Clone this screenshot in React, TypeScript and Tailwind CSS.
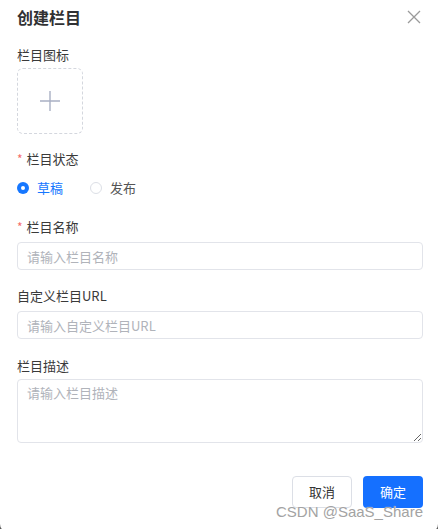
import { useState } from "react";

const cjk = { fontFamily: '"Noto Sans CJK SC", "Noto Sans", sans-serif' };

function Label({ text, required }: { text: string; required?: boolean }) {
  return (
    <div className="flex items-center h-[20px] text-[13px] text-[#3a3a3a]">
      {required && <span className="text-[#f56c6c] mr-[4px] text-[12px] leading-none">*</span>}
      <span>{text}</span>
    </div>
  );
}

function Radio({ label, checked, onClick }: { label: string; checked: boolean; onClick: () => void }) {
  return (
    <button onClick={onClick} className="flex items-center h-[20px] cursor-pointer">
      {checked ? (
        <span className="w-[12px] h-[12px] rounded-full bg-[#1677ff] flex items-center justify-center">
          <span className="w-[4px] h-[4px] rounded-full bg-white" />
        </span>
      ) : (
        <span className="w-[12px] h-[12px] rounded-full border border-[#dcdfe6] bg-white" />
      )}
      <span className={`ml-[8px] text-[13px] ${checked ? "text-[#1677ff]" : "text-[#555]"}`}>{label}</span>
    </button>
  );
}

export default function App() {
  const [status, setStatus] = useState("draft");

  return (
    <div className="w-[438px] h-[529px] overflow-hidden bg-[#5a5a5a]" style={cjk}>
      <div className="relative bg-white h-[532px] rounded-b-[8px] pl-[17px] pr-[15px] pt-[5px]">
        {/* 标题栏 */}
        <div className="flex items-center justify-between h-[24px]">
          <h2 className="text-[16px] font-bold text-[#303133]">创建栏目</h2>
          <svg width="14" height="14" viewBox="0 0 14 14" className="mr-[2px]">
            <path d="M1 1L13 13M13 1L1 13" stroke="#9a9a9a" strokeWidth="1.3" fill="none" />
          </svg>
        </div>

        <div className="mt-[16px]">
          <Label text="栏目图标" />
        </div>
        <div className="mt-[3px] w-[66px] h-[66px] border border-dashed border-[#d4d7de] rounded-[6px] flex items-center justify-center">
          <svg width="22" height="22" viewBox="0 0 22 22">
            <path d="M11 1V21M1 11H21" stroke="#a9b0c4" strokeWidth="1.4" fill="none" />
          </svg>
        </div>

        <div className="mt-[15px]">
          <Label text="栏目状态" required />
        </div>
        <div className="mt-[9px] flex items-center gap-[27px]">
          <Radio label="草稿" checked={status === "draft"} onClick={() => setStatus("draft")} />
          <Radio label="发布" checked={status === "publish"} onClick={() => setStatus("publish")} />
        </div>

        <div className="mt-[19px]">
          <Label text="栏目名称" required />
        </div>
        <input
          className="mt-[5px] w-full h-[28px] border border-[#e2e4ea] rounded-[4px] px-[9px] text-[13px] outline-none placeholder:text-[#b0b3ba]"
          placeholder="请输入栏目名称"
        />

        <div className="mt-[16px]">
          <Label text="自定义栏目URL" />
        </div>
        <input
          className="mt-[5px] w-full h-[28px] border border-[#e2e4ea] rounded-[4px] px-[9px] text-[13px] outline-none placeholder:text-[#b0b3ba]"
          placeholder="请输入自定义栏目URL"
        />

        <div className="mt-[17px]">
          <Label text="栏目描述" />
        </div>
        <textarea
          className="block mt-[3px] w-full h-[64px] border border-[#e2e4ea] rounded-[4px] px-[9px] py-[3px] text-[13px] outline-none placeholder:text-[#b0b3ba]"
          placeholder="请输入栏目描述"
        />

        {/* 底部按钮 */}
        <div className="mt-[33px] flex justify-end gap-[11px]">
          <button className="w-[60px] h-[32px] border border-[#dcdfe6] rounded-[4px] bg-white text-[13px] text-[#333]">
            取消
          </button>
          <button className="w-[60px] h-[32px] rounded-[4px] bg-[#1570ff] text-[13px] text-white">
            确定
          </button>
        </div>

        {/* 水印 */}
        <div
          className="absolute right-[15px] top-[502px] text-[15px] leading-[20px] text-[#a3a3a3]"
          style={{ fontFamily: '"Liberation Sans", Arial, sans-serif', textShadow: "0 0 1px #fff" }}
        >
          CSDN @SaaS_Share
        </div>
      </div>
    </div>
  );
}
